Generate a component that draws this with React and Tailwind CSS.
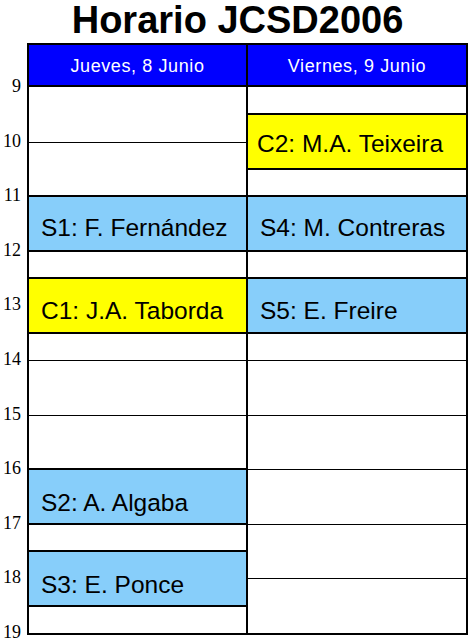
import React from "react";

const hourLines = [
  { h: 10, cls: "row-start-3 row-span-2" },
  { h: 11, cls: "row-start-5 row-span-2" },
  { h: 12, cls: "row-start-7 row-span-2" },
  { h: 13, cls: "row-start-9 row-span-2" },
  { h: 14, cls: "row-start-11 row-span-2" },
  { h: 15, cls: "row-start-13 row-span-2" },
  { h: 16, cls: "row-start-15 row-span-2" },
  { h: 17, cls: "row-start-17 row-span-2" },
  { h: 18, cls: "row-start-19 row-span-2" },
];

const days = [
  {
    name: "Jueves, 8 Junio",
    width: "w-[219px] border-r-2 border-black",
    events: [
      { label: "S1: F. Fernández", cls: "row-start-5 row-span-2 bg-[#87cefa] pl-[12px] pt-[19px]" },
      { label: "C1: J.A. Taborda", cls: "row-start-8 row-span-2 bg-[#ffff00] pl-[12px] pt-[20px]" },
      { label: "S2: A. Algaba", cls: "row-start-15 row-span-2 bg-[#87cefa] pl-[12px] pt-[21px]" },
      { label: "S3: E. Ponce", cls: "row-start-18 row-span-2 bg-[#87cefa] pl-[12px] pt-[21px]" },
    ],
  },
  {
    name: "Viernes, 9 Junio",
    width: "w-[218px]",
    events: [
      { label: "C2: M.A. Teixeira", cls: "row-start-2 row-span-2 bg-[#ffff00] pl-[9px] pt-[17px]" },
      { label: "S4: M. Contreras", cls: "row-start-5 row-span-2 bg-[#87cefa] pl-[12px] pt-[19px]" },
      { label: "S5: E. Freire", cls: "row-start-8 row-span-2 bg-[#87cefa] pl-[12px] pt-[20px]" },
    ],
  },
];

const hours = [9, 10, 11, 12, 13, 14, 15, 16, 17, 18, 19];

export default function App() {
  return (
    <div className="w-[469px] h-[641px] overflow-hidden bg-white text-black font-['Liberation_Sans',Arial,sans-serif]">
      <h1 className="h-[43px] pl-[6px] text-center text-[38px] leading-[40px] font-bold">
        Horario JCSD2006
      </h1>
      <div className="flex items-start">
        <div className="w-[27px] h-[592px] flex flex-col pt-[15.7px] font-['Liberation_Serif','Times_New_Roman',serif]">
          {hours.map((h) => (
            <div
              key={h}
              className="h-[54.6px] shrink-0 flex items-center justify-end pr-[6px] text-[18px] leading-[18px]"
            >
              {h}
            </div>
          ))}
        </div>
        <div className="w-[441px] border-2 border-black">
          <div className="flex h-[42px] border-b-2 border-black bg-[#0000ff]">
            {days.map((d) => (
              <div
                key={d.name}
                className={`${d.width} flex items-center justify-center pt-[2px] text-white text-[18px] leading-[18px] tracking-[0.6px]`}
              >
                {d.name}
              </div>
            ))}
          </div>
          <div className="flex">
            {days.map((d) => (
              <div key={d.name} className={`${d.width} grid grid-cols-1 grid-rows-[repeat(20,27.3px)]`}>
                {hourLines.map((l) => (
                  <div key={l.h} className={`col-start-1 ${l.cls} border-t border-black`} />
                ))}
                {d.events.map((e) => (
                  <div
                    key={e.label}
                    className={`col-start-1 ${e.cls} my-[-1px] border-y-2 border-black text-[24.5px] leading-[24px] whitespace-nowrap`}
                  >
                    {e.label}
                  </div>
                ))}
              </div>
            ))}
          </div>
        </div>
      </div>
    </div>
  );
}
